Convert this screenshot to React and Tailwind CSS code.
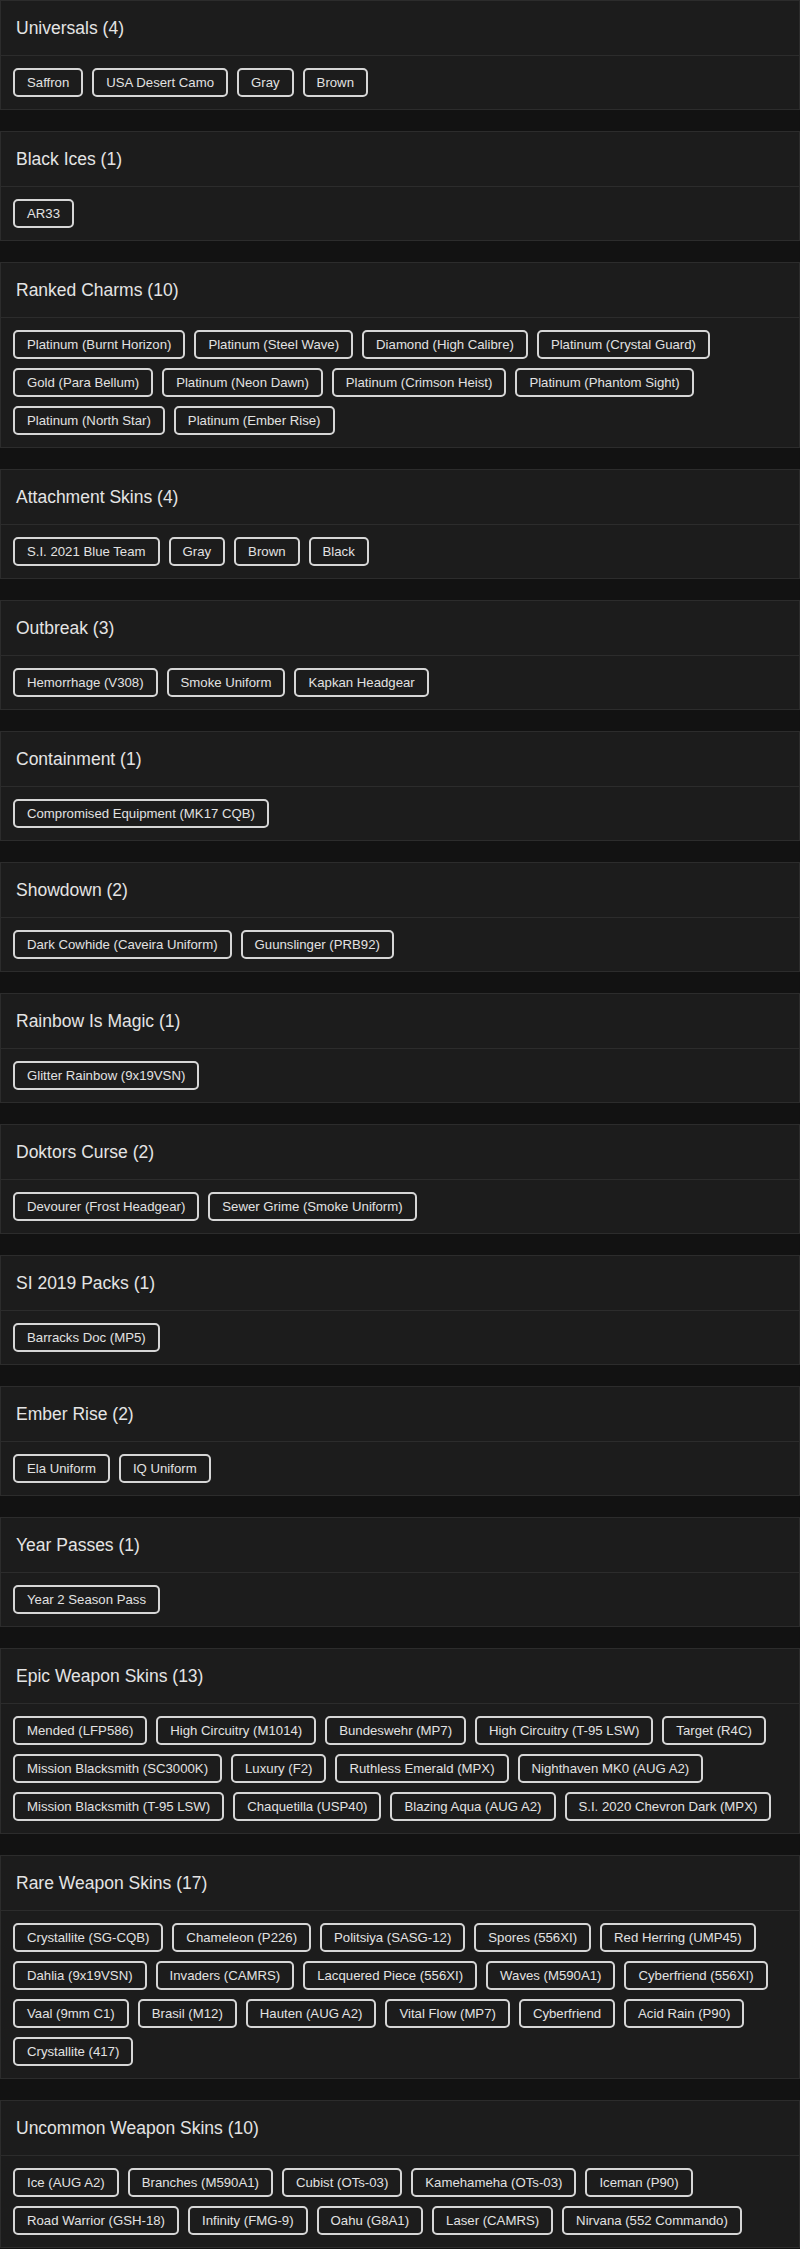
import React from "react";

const groups = [
  { title: "Universals", items: ["Saffron", "USA Desert Camo", "Gray", "Brown"] },
  { title: "Black Ices", items: ["AR33"] },
  {
    title: "Ranked Charms",
    items: [
      "Platinum (Burnt Horizon)",
      "Platinum (Steel Wave)",
      "Diamond (High Calibre)",
      "Platinum (Crystal Guard)",
      "Gold (Para Bellum)",
      "Platinum (Neon Dawn)",
      "Platinum (Crimson Heist)",
      "Platinum (Phantom Sight)",
      "Platinum (North Star)",
      "Platinum (Ember Rise)",
    ],
  },
  { title: "Attachment Skins", items: ["S.I. 2021 Blue Team", "Gray", "Brown", "Black"] },
  { title: "Outbreak", items: ["Hemorrhage (V308)", "Smoke Uniform", "Kapkan Headgear"] },
  { title: "Containment", items: ["Compromised Equipment (MK17 CQB)"] },
  { title: "Showdown", items: ["Dark Cowhide (Caveira Uniform)", "Guunslinger (PRB92)"] },
  { title: "Rainbow Is Magic", items: ["Glitter Rainbow (9x19VSN)"] },
  { title: "Doktors Curse", items: ["Devourer (Frost Headgear)", "Sewer Grime (Smoke Uniform)"] },
  { title: "SI 2019 Packs", items: ["Barracks Doc (MP5)"] },
  { title: "Ember Rise", items: ["Ela Uniform", "IQ Uniform"] },
  { title: "Year Passes", items: ["Year 2 Season Pass"] },
  {
    title: "Epic Weapon Skins",
    items: [
      "Mended (LFP586)",
      "High Circuitry (M1014)",
      "Bundeswehr (MP7)",
      "High Circuitry (T-95 LSW)",
      "Target (R4C)",
      "Mission Blacksmith (SC3000K)",
      "Luxury (F2)",
      "Ruthless Emerald (MPX)",
      "Nighthaven MK0 (AUG A2)",
      "Mission Blacksmith (T-95 LSW)",
      "Chaquetilla (USP40)",
      "Blazing Aqua (AUG A2)",
      "S.I. 2020 Chevron Dark (MPX)",
    ],
  },
  {
    title: "Rare Weapon Skins",
    items: [
      "Crystallite (SG-CQB)",
      "Chameleon (P226)",
      "Politsiya (SASG-12)",
      "Spores (556XI)",
      "Red Herring (UMP45)",
      "Dahlia (9x19VSN)",
      "Invaders (CAMRS)",
      "Lacquered Piece (556XI)",
      "Waves (M590A1)",
      "Cyberfriend (556XI)",
      "Vaal (9mm C1)",
      "Brasil (M12)",
      "Hauten (AUG A2)",
      "Vital Flow (MP7)",
      "Cyberfriend",
      "Acid Rain (P90)",
      "Crystallite (417)",
    ],
  },
  {
    title: "Uncommon Weapon Skins",
    items: [
      "Ice (AUG A2)",
      "Branches (M590A1)",
      "Cubist (OTs-03)",
      "Kamehameha (OTs-03)",
      "Iceman (P90)",
      "Road Warrior (GSH-18)",
      "Infinity (FMG-9)",
      "Oahu (G8A1)",
      "Laser (CAMRS)",
      "Nirvana (552 Commando)",
    ],
  },
];

function Group({ title, items }) {
  return (
    <div className="bg-[#1c1c1c] border border-[#2c2c2c] mb-[21px] last:mb-0">
      <div className="h-[55px] flex items-center px-[15px] border-b border-[#2c2c2c]">
        <h3 className="text-[17.5px] font-medium text-[#e4e4e4]">
          {title} ({items.length})
        </h3>
      </div>
      <div className="flex flex-wrap gap-[9px] px-3 py-3">
        {items.map((item, i) => (
          <span
            key={i}
            className="h-[29px] flex items-center px-3 border-2 border-[#d6d6d6] rounded-[5px] text-[13.2px] text-[#e2e2e2] whitespace-nowrap"
          >
            {item}
          </span>
        ))}
      </div>
    </div>
  );
}

export default function App() {
  return (
    <div
      className="min-h-screen bg-[#121212]"
      style={{ fontFamily: '"Liberation Sans", Arial, sans-serif' }}
    >
      {groups.map((g) => (
        <Group key={g.title} title={g.title} items={g.items} />
      ))}
    </div>
  );
}
